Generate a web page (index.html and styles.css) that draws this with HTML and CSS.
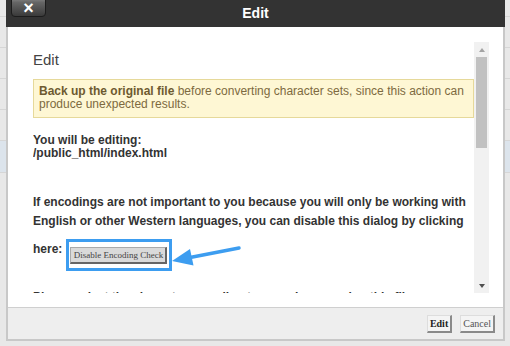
FILE: index.html
```html
<!DOCTYPE html>
<html lang="en">

<head>
    <meta charset="utf-8">
    <meta name="viewport" content="width=device-width, initial-scale=1">
    <title>Edit - File Manager</title>
    <link rel="stylesheet" href="styles.css">
</head>

<body>
    <!-- File list behind the modal -->
    <div class="page">
        <div class="page-row page-row-first"></div>
        <div class="page-row"></div>
        <div class="page-row"></div>
        <div class="page-row"></div>
        <div class="page-row"></div>
        <div class="page-row page-row-active"></div>
    </div>

    <div class="dialog">
        <div class="dialog-title">
            <button class="dialog-close" type="button">&times;</button>
            Edit
        </div>

        <div class="dialog-body">
            <div class="scroll">
                <div class="scroll-content">
                    <h2>Edit</h2>

                    <div class="warning">
                        <b>Back up the original file</b> before converting character sets, since this action can produce unexpected results.
                    </div>

                    <p class="file-info">You will be editing:<br>/public_html/index.html</p>

                    <p class="note">If encodings are not important to you because you will only be working with English or other Western languages, you can disable this dialog by clicking here: <span class="highlight"><button class="btn-disable" type="button">Disable Encoding Check</button></span></p>

                    <p class="note note-next">Please select the character encoding to use when opening this file.</p>
                </div>

                <div class="scrollbar">
                    <div class="sb-btn sb-up"></div>
                    <div class="sb-track">
                        <div class="sb-thumb"></div>
                    </div>
                    <div class="sb-btn sb-down"></div>
                </div>
            </div>
        </div>

        <div class="dialog-footer">
            <button class="btn btn-primary" type="button">Edit</button>
            <button class="btn" type="button">Cancel</button>
        </div>
    </div>

    <!-- Pointer to the disable button -->
    <svg class="pointer" width="76" height="30" viewBox="0 0 76 30">
        <line x1="71" y1="8" x2="22" y2="17.5" stroke="#3d9df0" stroke-width="3.5" stroke-linecap="round" />
        <polygon points="4,21 22,9 25.5,25.5" fill="#3d9df0" />
    </svg>
</body>

</html>
```

FILE: styles.css
```css
* {
    margin: 0;
    padding: 0;
    box-sizing: border-box;
}

html,
body {
    height: 100%;
    overflow: hidden;
}

body {
    position: relative;
    background: #e8e8e8;
    font-family: 'Liberation Sans', Arial, sans-serif;
    color: #333;
}

/* Background list */
.page-row {
    height: 31px;
    border-bottom: 1px solid #d6d6d6;
}

.page-row-first {
    height: 17px;
}

.page-row-active {
    height: 32px;
    background: #dce4ec;
}

/* Modal */
.dialog {
    position: absolute;
    left: 6px;
    top: 0;
    width: 499px;
    height: 341px;
    display: flex;
    flex-direction: column;
    background: #fff;
    border: 2px solid #c8c8c8;
    border-top: 0;
}

.dialog-title {
    position: relative;
    height: 27px;
    margin: 0 -2px;
    background: #333;
    color: #fff;
    font-size: 14px;
    font-weight: bold;
    line-height: 27px;
    text-align: center;
}

.dialog-close {
    position: absolute;
    left: 5px;
    top: -6px;
    width: 35px;
    height: 23px;
    padding-top: 5px;
    background: linear-gradient(#a0a0a0 0%, #666 35%, #3a3a3a 100%);
    border: 1px solid #1c1c1c;
    border-radius: 4px;
    color: #fff;
    font-family: 'Liberation Sans', Arial, sans-serif;
    font-size: 18px;
    font-weight: bold;
    line-height: 17px;
}

.dialog-body {
    flex: 1;
    min-height: 0;
    display: flex;
    flex-direction: column;
    padding: 15px 14px 14px 25px;
}

.scroll {
    flex: 1;
    min-height: 0;
    display: flex;
}

.scroll-content {
    flex: 1;
    overflow: hidden;
    font-size: 12px;
}

.scroll-content h2 {
    margin-top: 9px;
    font-size: 15px;
    font-weight: normal;
    line-height: 18px;
    color: #444;
}

.warning {
    margin-top: 10px;
    padding: 5px 5px 6px;
    background: #fef7d4;
    border: 1px solid #e6d99a;
    color: #7d6a40;
    line-height: 13px;
}

.warning b {
    color: #6d5a30;
}

.file-info {
    margin-top: 16px;
    font-weight: bold;
    line-height: 13px;
}

.note {
    margin-top: 33px;
    font-weight: bold;
    line-height: 19px;
}

.note-next {
    margin-top: 17px;
}

.highlight {
    display: inline-block;
    margin-top: 8px;
    padding: 5px 2px 4px 1px;
    border: 3px solid #3d9df0;
    vertical-align: -5px;
}

.btn-disable {
    display: block;
    height: 17px;
    padding: 0 2px 0 3px;
    background: #dadada;
    border: 1px solid #aaa;
    border-right: 2px solid #666;
    border-bottom: 2px solid #666;
    font-family: 'Liberation Serif', 'Times New Roman', serif;
    font-size: 9px;
    color: #444;
}

/* Fake scrollbar */
.scrollbar {
    width: 15px;
    display: flex;
    flex-direction: column;
    background: #f1f1f1;
}

.sb-btn {
    height: 15px;
    display: flex;
    justify-content: center;
    align-items: center;
}

.sb-up::after,
.sb-down::after {
    content: '';
    border-left: 3.5px solid transparent;
    border-right: 3.5px solid transparent;
}

.sb-up::after {
    border-bottom: 4px solid #a3a3a3;
}

.sb-down::after {
    border-top: 4px solid #505050;
}

.sb-track {
    flex: 1;
}

.sb-thumb {
    height: 91px;
    margin: 0 2px;
    background: #c1c1c1;
}

/* Footer */
.dialog-footer {
    height: 32px;
    display: flex;
    justify-content: flex-end;
    align-items: center;
    gap: 8px;
    padding-right: 8px;
    background: #eee;
    border-top: 1px solid #cfcfcf;
}

.btn {
    height: 18px;
    padding: 0 2px;
    background: #f4f4f4;
    border: 1px solid #ddd;
    border-right: 2px solid #8a8a8a;
    border-bottom: 2px solid #8a8a8a;
    font-family: 'Liberation Serif', 'Times New Roman', serif;
    font-size: 10px;
    color: #555;
}

.btn-primary {
    font-weight: bold;
    color: #222;
}

.pointer {
    position: absolute;
    left: 168px;
    top: 240px;
}
```
